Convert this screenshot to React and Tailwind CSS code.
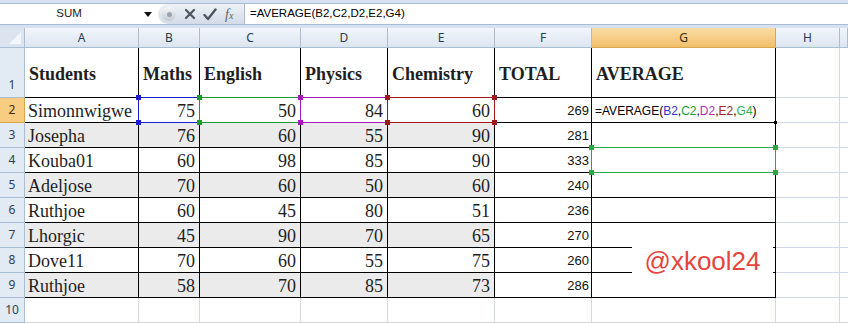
import React from "react";

const rows = [
  ["Simonnwigwe", 75, 50, 84, 60, 269],
  ["Josepha", 76, 60, 55, 90, 281],
  ["Kouba01", 60, 98, 85, 90, 333],
  ["Adeljose", 70, 60, 50, 60, 240],
  ["Ruthjoe", 60, 45, 80, 51, 236],
  ["Lhorgic", 45, 90, 70, 65, 270],
  ["Dove11", 70, 60, 55, 75, 260],
  ["Ruthjoe", 58, 70, 85, 73, 286],
];

const letters = ["A", "B", "C", "D", "E", "F", "G", "H", ""];
const headers = ["Students", "Maths", "English", "Physics", "Chemistry", "TOTAL", "AVERAGE"];

// colours of the reference boxes around B2..E2
const refColors = ["#1c1cd0", "#1d9a2e", "#a21cb8", "#a01818"];

const serif = "font-['Liberation_Serif','Times_New_Roman',serif]";
const sans = "font-['Liberation_Sans',Arial,sans-serif]";

const Handles = ({ color }) => (
  <>
    <span className="absolute -left-[3px] -top-[3px] h-[5px] w-[5px]" style={{ background: color }} />
    <span className="absolute -right-[3px] -top-[3px] h-[5px] w-[5px]" style={{ background: color }} />
    <span className="absolute -left-[3px] -bottom-[3px] h-[5px] w-[5px]" style={{ background: color }} />
    <span className="absolute -right-[3px] -bottom-[3px] h-[5px] w-[5px]" style={{ background: color }} />
  </>
);

const RefBox = ({ color }) => (
  <div className="pointer-events-none absolute -left-px -top-px -right-px -bottom-px z-10 border" style={{ borderColor: color }}>
    <Handles color={color} />
  </div>
);

const FormulaBar = () => (
  <div className={`h-[28px] bg-[#d6e2f1] pt-[3px] pb-[3px] ${sans}`}>
    <div className="flex h-[22px] border-y border-[#a9bbd2] bg-white">
      <div className="flex w-[158px] items-center">
        <span className="w-[138px] text-center text-[11.5px] text-[#222]">SUM</span>
        <svg width="8" height="5" viewBox="0 0 8 5" className="ml-[6px]">
          <path d="M0 0h8L4 5z" fill="#111" />
        </svg>
      </div>
      <div className="flex w-[87px] items-center rounded-l-full border-r border-[#a9bbd2] bg-gradient-to-b from-[#eef2f7] to-[#d3dce8] pl-[4px]">
        <span className="flex h-[14px] w-[14px] items-center justify-center rounded-full bg-gradient-to-b from-[#f6f6f6] to-[#c3c9d2]">
          <span className="h-[5px] w-[5px] rounded-full bg-[#9aa3ae]" />
        </span>
        <svg width="12" height="12" viewBox="0 0 12 12" className="ml-[8px]">
          <path d="M2 2l8 8M10 2l-8 8" stroke="#4f555d" strokeWidth="2.2" strokeLinecap="round" />
        </svg>
        <svg width="14" height="13" viewBox="0 0 14 13" className="ml-[7px]">
          <path d="M1.5 7l3.5 4L12.5 1.5" stroke="#4d5763" strokeWidth="2.4" fill="none" strokeLinecap="round" strokeLinejoin="round" />
        </svg>
        <span className={`ml-[8px] text-[14px] italic text-[#5e636a] ${serif}`}>
          f<span className="text-[10px]">x</span>
        </span>
      </div>
      <div className="flex flex-1 items-center pl-[5px] text-[11.5px] text-black">=AVERAGE(B2,C2,D2,E2,G4)</div>
    </div>
  </div>
);

const ColHeader = ({ label, selected }) => (
  <div
    className={`flex h-[20px] items-center justify-center border-r border-b text-[12px] ${
      selected
        ? "border-[#d8a64e] bg-gradient-to-b from-[#fbdca5] to-[#f1c06a] text-[#3a2c10]"
        : "border-[#a9bdd4] bg-gradient-to-b from-[#f2f6fb] to-[#dce5f0] text-[#2b3a50]"
    }`}
  >
    {label}
  </div>
);

const RowHeader = ({ n, tall, selected }) => (
  <div
    className={`flex items-end justify-center border-r border-b pb-[3px] text-[12px] ${
      tall ? "h-[50px]" : "h-[25px]"
    } ${selected ? "border-[#d8a64e] bg-[#f8cd82] text-[#3a2c10]" : "border-[#a9bdd4] bg-[#e2eaf4] text-[#2f3e52]"}`}
  >
    {n}
  </div>
);

const Formula = () => (
  <span className={`${sans} text-[12px] text-black`}>
    =AVERAGE(<span className="text-[#3434c4]">B2</span>,<span className="text-[#22a03a]">C2</span>,
    <span className="text-[#b02fb6]">D2</span>,<span className="text-[#a2262a]">E2</span>,
    <span className="text-[#2fb04a]">G4</span>)
  </span>
);

export default function App() {
  return (
    <div className="relative h-[323px] w-[848px] overflow-hidden bg-white">
      <FormulaBar />
      <div className="grid grid-cols-[25px_114px_61px_101px_87px_107px_97px_184px_64px_8px]">
        {/* column headers */}
        <div className="flex h-[20px] items-end justify-end border-r border-b border-[#a9bdd4] bg-[#dbe4ef] p-[3px]">
          <svg width="12" height="12" viewBox="0 0 12 12">
            <path d="M12 0v12H0z" fill="#f3f6fa" />
          </svg>
        </div>
        {letters.map((l, i) => (
          <ColHeader key={i} label={l} selected={l === "G"} />
        ))}

        {/* row 1: headings */}
        <RowHeader n={1} tall />
        {headers.map((h) => (
          <div
            key={h}
            className={`flex h-[50px] items-end border-r border-b border-black pb-[12px] pl-[4px] text-[18px] font-bold leading-[22px] text-[#1e1e1e] ${serif}`}
          >
            {h}
          </div>
        ))}
        <div className="h-[50px] border-r border-b border-[#d0d7e5]" />
        <div className="h-[50px] border-b border-[#d0d7e5]" />

        {/* data rows */}
        {rows.map((r, ri) => {
          const gray = ri % 2 === 1 ? "bg-[#ebebeb]" : "bg-white";
          const rowNo = ri + 2;
          return (
            <React.Fragment key={ri}>
              <RowHeader n={rowNo} selected={rowNo === 2} />
              <div className={`flex h-[25px] items-end border-r border-b border-black pl-[3px] text-[18px] leading-[22px] text-[#1e1e1e] ${gray} ${serif}`}>
                {r[0]}
              </div>
              {r.slice(1, 5).map((v, ci) => (
                <div
                  key={ci}
                  className={`relative flex h-[25px] items-end justify-end border-r border-b border-black pr-[4px] text-[18px] leading-[22px] text-[#1e1e1e] ${gray} ${serif}`}
                >
                  {v}
                  {rowNo === 2 && <RefBox color={refColors[ci]} />}
                </div>
              ))}
              <div className={`flex h-[25px] items-end justify-end border-r border-b border-black pr-[2px] pb-[3px] text-[13px] leading-[16px] text-[#111] ${sans}`}>
                {r[5]}
              </div>
              <div className="relative flex h-[25px] items-end border-r border-b border-black pb-[3px] pl-[3px] leading-[16px]">
                {rowNo === 2 && (
                  <>
                    <Formula />
                    <span className="absolute -right-[2px] -bottom-[2px] z-10 h-[3px] w-[3px] bg-black" />
                  </>
                )}
                {rowNo === 4 && (
                  <div className="pointer-events-none absolute -left-px -top-px -right-px -bottom-px z-10 border border-[#2aa845]">
                    <Handles color="#2aa845" />
                  </div>
                )}
              </div>
              <div className="h-[25px] border-r border-b border-[#d0d7e5]" />
              <div className="h-[25px] border-b border-[#d0d7e5]" />
            </React.Fragment>
          );
        })}

        {/* row 10 */}
        <RowHeader n={10} />
        {letters.slice(0, 8).map((l) => (
          <div key={l} className="h-[25px] border-r border-b border-[#d0d7e5]" />
        ))}
        <div className="h-[25px] border-b border-[#d0d7e5]" />
      </div>

      {/* watermark */}
      <div className={`absolute left-[632px] top-[239px] z-20 flex h-[44px] w-[141px] items-center justify-center bg-white text-[26px] leading-none text-[#e8443b] ${sans}`}>
        @xkool24
      </div>
    </div>
  );
}
